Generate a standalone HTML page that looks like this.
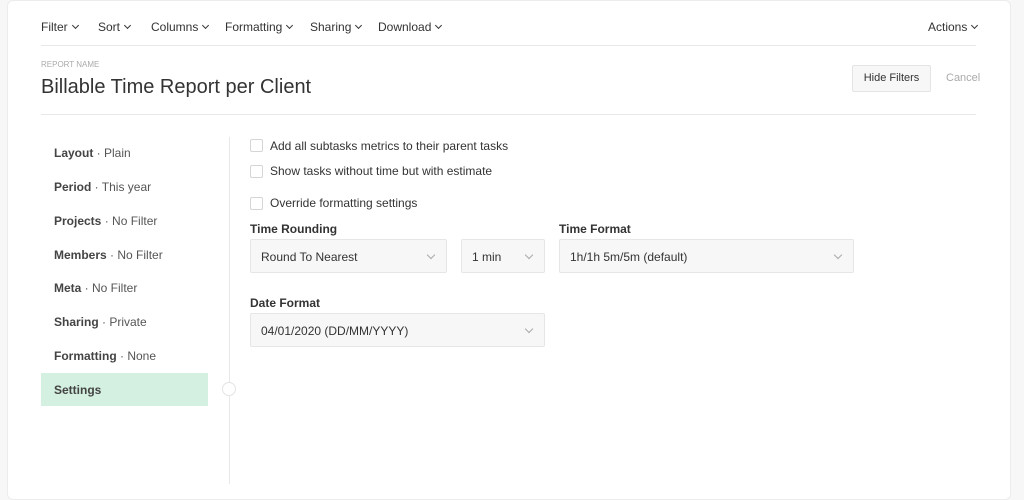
<!DOCTYPE html>
<html><head><style>
*{margin:0;padding:0;box-sizing:border-box}
body{width:1024px;height:484px;background:#f7f7f7;font-family:"Liberation Sans",sans-serif;color:#333;position:relative;overflow:hidden}
.card{position:absolute;left:7px;top:0;width:1004px;height:500px;background:#fff;border:1px solid #ececec;border-radius:6px}
.a{position:absolute;white-space:nowrap}
.menu{font-size:12px;color:#333;top:20px}
.chev{display:inline-block;width:5px;height:5px;border-right:1.4px solid #333;border-bottom:1.4px solid #333;transform:rotate(45deg);margin-left:5px;position:relative;top:-3px}
.hl{position:absolute;left:41px;width:935px;height:1px;background:#e8e8e8}
.side{font-size:12px;color:#555;left:54px}
.side b{font-weight:bold;color:#444}
.cb{position:absolute;width:13px;height:13px;border:1px solid #d5d5d5;border-radius:2px;left:250px}
.lbl{font-size:12px;color:#333}
.sel{position:absolute;height:34px;background:#f7f7f7;border:1px solid #e6e6e6;border-radius:2px;font-size:12px;color:#333;padding:10px 10px}
.sel i{position:absolute;right:12px;top:12px;width:6px;height:6px;border-right:1px solid #aaa;border-bottom:1px solid #aaa;transform:rotate(45deg)}
</style></head><body>
<div class="card"></div>
<div class="a menu" style="left:41px">Filter<span class="chev"></span></div>
<div class="a menu" style="left:98px">Sort<span class="chev"></span></div>
<div class="a menu" style="left:151px">Columns<span class="chev"></span></div>
<div class="a menu" style="left:225px">Formatting<span class="chev"></span></div>
<div class="a menu" style="left:310px">Sharing<span class="chev"></span></div>
<div class="a menu" style="left:378px">Download<span class="chev"></span></div>
<div class="a menu" style="left:928px">Actions<span class="chev"></span></div>
<div class="hl" style="top:45px"></div>
<div class="a" style="left:41px;top:60px;font-size:8px;color:#aaa">REPORT NAME</div>
<div class="a" style="left:41px;top:76px;font-size:20px;color:#333">Billable Time Report per Client</div>
<div class="a" style="left:852px;top:65px;width:79px;height:27px;border:1px solid #e4e4e4;background:#f7f7f7;border-radius:2px;font-size:11px;text-align:center;line-height:25px;color:#333">Hide Filters</div>
<div class="a" style="left:946px;top:72px;font-size:11px;color:#aaa">Cancel</div>
<div class="hl" style="top:114px"></div>
<div class="a" style="left:229px;top:137px;width:1px;height:347px;background:#e8e8e8"></div>
<div class="a" style="left:222px;top:382px;width:14px;height:14px;border:1px solid #e4e4e4;border-radius:50%;background:#fff"></div>
<div class="a" style="left:41px;top:373px;width:167px;height:33px;background:#d3f0e1"></div>
<div class="a side" style="top:146px"><b>Layout</b> · Plain</div>
<div class="a side" style="top:180px"><b>Period</b> · This year</div>
<div class="a side" style="top:214px"><b>Projects</b> · No Filter</div>
<div class="a side" style="top:248px"><b>Members</b> · No Filter</div>
<div class="a side" style="top:281px"><b>Meta</b> · No Filter</div>
<div class="a side" style="top:315px"><b>Sharing</b> · Private</div>
<div class="a side" style="top:349px"><b>Formatting</b> · None</div>
<div class="a side" style="top:383px"><b>Settings</b></div>
<div class="cb" style="top:139px"></div><div class="a lbl" style="left:270px;top:139px">Add all subtasks metrics to their parent tasks</div>
<div class="cb" style="top:165px"></div><div class="a lbl" style="left:270px;top:164px">Show tasks without time but with estimate</div>
<div class="cb" style="top:197px"></div><div class="a lbl" style="left:270px;top:196px">Override formatting settings</div>
<div class="a lbl" style="left:250px;top:222px;font-weight:bold">Time Rounding</div>
<div class="a lbl" style="left:559px;top:222px;font-weight:bold">Time Format</div>
<div class="sel" style="left:250px;top:239px;width:197px">Round To Nearest<i></i></div>
<div class="sel" style="left:461px;top:239px;width:84px">1 min<i></i></div>
<div class="sel" style="left:559px;top:239px;width:295px">1h/1h 5m/5m (default)<i></i></div>
<div class="a lbl" style="left:250px;top:296px;font-weight:bold">Date Format</div>
<div class="sel" style="left:250px;top:313px;width:295px">04/01/2020 (DD/MM/YYYY)<i></i></div>
</body></html>
